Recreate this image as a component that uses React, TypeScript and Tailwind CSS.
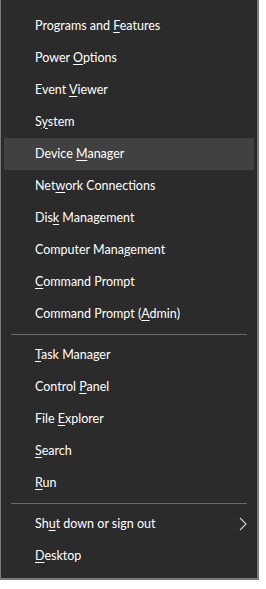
import { ReactNode } from 'react'

type Item = { pre: string; key: string; post: string; arrow?: boolean; active?: boolean }

const groups: Item[][] = [
  [
    { pre: 'Programs and ', key: 'F', post: 'eatures' },
    { pre: 'Power ', key: 'O', post: 'ptions' },
    { pre: 'Event ', key: 'V', post: 'iewer' },
    { pre: 'S', key: 'y', post: 'stem' },
    { pre: 'Device ', key: 'M', post: 'anager', active: true },
    { pre: 'Net', key: 'w', post: 'ork Connections' },
    { pre: 'Dis', key: 'k', post: ' Management' },
    { pre: 'Computer Mana', key: 'g', post: 'ement' },
    { pre: '', key: 'C', post: 'ommand Prompt' },
    { pre: 'Command Prompt (', key: 'A', post: 'dmin)' },
  ],
  [
    { pre: '', key: 'T', post: 'ask Manager' },
    { pre: 'Control ', key: 'P', post: 'anel' },
    { pre: 'File ', key: 'E', post: 'xplorer' },
    { pre: '', key: 'S', post: 'earch' },
    { pre: '', key: 'R', post: 'un' },
  ],
  [
    { pre: 'Sh', key: 'u', post: 't down or sign out', arrow: true },
    { pre: '', key: 'D', post: 'esktop' },
  ],
]

function Row({ item }: { item: Item }): ReactNode {
  return (
    <div
      className={`mx-[3px] flex h-8 items-center justify-between pl-[31px] pr-[7px] ${
        item.active ? 'bg-[#414141]' : ''
      }`}
    >
      <span>
        {item.pre}
        <span className="underline underline-offset-2">{item.key}</span>
        {item.post}
      </span>
      {item.arrow && (
        <svg width="8" height="14" viewBox="0 0 8 14" fill="none">
          <path d="M1 1l6 6-6 6" stroke="#cfcfcf" strokeWidth="1.1" />
        </svg>
      )}
    </div>
  )
}

export default function App() {
  return (
    <div className="h-[589px] w-[266px] bg-white">
      <div
        className="h-[580px] w-[259px] border-b-2 border-l border-r-2 border-[#7a7a7a] bg-[#2b2b2b] pt-[10px] text-[12.5px] text-white"
        style={{ fontFamily: 'Lato, sans-serif' }}
      >
        {groups.map((g, i) => (
          <div key={i}>
            {i > 0 && <div className="mx-[10px] my-1 h-px bg-[#6a6a6a]" />}
            {g.map((item) => (
              <Row key={item.pre + item.key} item={item} />
            ))}
          </div>
        ))}
      </div>
    </div>
  )
}
